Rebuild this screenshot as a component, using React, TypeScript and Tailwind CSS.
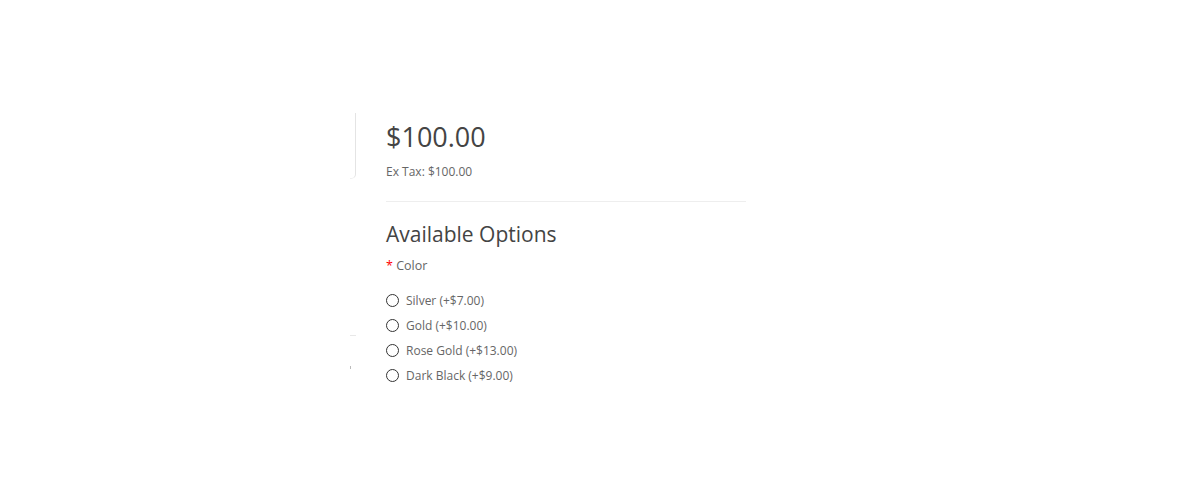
import React from "react";

const options = [
  { label: "Silver", price: "+$7.00" },
  { label: "Gold", price: "+$10.00" },
  { label: "Rose Gold", price: "+$13.00" },
  { label: "Dark Black", price: "+$9.00" },
];

export default function App() {
  return (
    <div className="h-[500px] w-[1200px] bg-white font-['Open_Sans',sans-serif] text-[#444]">
      <div className="flex pt-[113px]">
        {/* cropped thumbnail column */}
        <div className="ml-[300px] flex w-[56px] flex-col items-end">
          <div className="h-[66px] w-[6px] rounded-br-[5px] border-r border-b border-[#e4e4e4] border-b-[#f0f0f0]" />
          <div className="mt-[156px] mr-0 h-px w-[6px] self-end bg-[#e8e8e8]" />
          <div className="mt-[30px] mr-[5px] h-[3px] w-px bg-[#bbb]" />
        </div>

        <div className="ml-[30px] w-[360px]">
          <h2 className="text-[27px] leading-[48px] text-[#444]">$100.00</h2>
          <p className="mt-[1px] text-[12px] leading-[20px] text-[#666]">Ex Tax: $100.00</p>
          <hr className="mt-[19px] border-[#eee]" />

          <h3 className="mt-[16px] text-[21px] leading-[32px] text-[#444]">Available Options</h3>
          <div className="mt-[6px] text-[12.5px] leading-[20px] text-[#666]">
            <span className="text-[#f00]">*</span> Color
          </div>

          <div className="mt-[12px] flex flex-col">
            {options.map((o) => (
              <label key={o.label} className="flex h-[25px] items-center gap-[7px] text-[12px] text-[#666]">
                <span className="box-border h-[13px] w-[13px] rounded-full border border-[#333]" />
                <span>
                  {o.label} ({o.price})
                </span>
              </label>
            ))}
          </div>
        </div>
      </div>
    </div>
  );
}
